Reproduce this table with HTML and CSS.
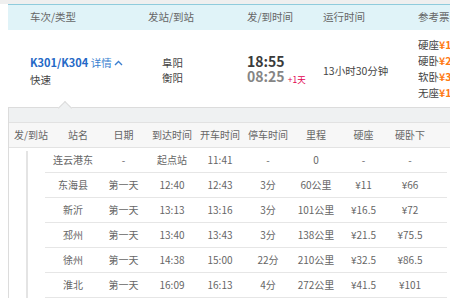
FILE: index.html
```html
<!DOCTYPE html>
<html lang="zh-CN">
<head>
<meta charset="utf-8">
<title>K301/K304</title>
<link rel="stylesheet" href="styles.css">
</head>
<body>
<div class="topline"></div>
<div class="train">
  <div class="thead">
    <div>车次/类型</div>
    <div>发站/到站</div>
    <div>发/到时间</div>
    <div>运行时间</div>
    <div class="nowrap">参考票价</div>
  </div>
  <div class="trow">
    <div class="tcode">
      <div><span class="code">K301/K304</span> <span class="detail">详情<svg class="chev" width="9" height="6" viewBox="0 0 9 6"><path d="M1 5 L4.5 1.5 L8 5" fill="none" stroke="#3a7fd0" stroke-width="1.4"/></svg></span></div>
      <div class="type">快速</div>
    </div>
    <div class="stations">
      <div>阜阳</div>
      <div>衡阳</div>
    </div>
    <div class="times">
      <div class="dep">18:55</div>
      <div class="arr">08:25 <span class="plus">+1天</span></div>
    </div>
    <div class="dur">13小时30分钟</div>
    <div class="prices">
      <div>硬座<b>¥147.5</b></div>
      <div>硬卧<b>¥256.5</b></div>
      <div>软卧<b>¥388.5</b></div>
      <div>无座<b>¥147.5</b></div>
    </div>
  </div>
</div>
<div class="panel">
  <div class="ptop"></div>
  <div class="shead">
    <div>发/到站</div>
    <div class="hname">站名</div>
    <div>日期</div>
    <div>到达时间</div>
    <div>开车时间</div>
    <div>停车时间</div>
    <div>里程</div>
    <div>硬座</div>
    <div>硬卧下</div>
    <div></div>
  </div>
  <div class="sbody">
    <div class="rail"><span></span></div>
    <div class="stops">
      <div class="srow"><div></div><div class="name">连云港东</div><div>-</div><div>起点站</div><div>11:41</div><div>-</div><div>0</div><div>-</div><div>-</div><div></div></div>
      <div class="srow"><div></div><div class="name">东海县</div><div>第一天</div><div>12:40</div><div>12:43</div><div>3分</div><div>60公里</div><div>¥11</div><div>¥66</div><div></div></div>
      <div class="srow"><div></div><div class="name">新沂</div><div>第一天</div><div>13:13</div><div>13:16</div><div>3分</div><div>101公里</div><div>¥16.5</div><div>¥72</div><div></div></div>
      <div class="srow"><div></div><div class="name">邳州</div><div>第一天</div><div>13:40</div><div>13:43</div><div>3分</div><div>138公里</div><div>¥21.5</div><div>¥75.5</div><div></div></div>
      <div class="srow"><div></div><div class="name">徐州</div><div>第一天</div><div>14:38</div><div>15:00</div><div>22分</div><div>210公里</div><div>¥32.5</div><div>¥86.5</div><div></div></div>
      <div class="srow"><div></div><div class="name">淮北</div><div>第一天</div><div>16:09</div><div>16:13</div><div>4分</div><div>272公里</div><div>¥41.5</div><div>¥101</div><div></div></div>
    </div>
  </div>
</div>
</body>
</html>
```

FILE: styles.css
```css
html, body {
  margin: 0;
  padding: 0;
}
body {
  width: 450px;
  height: 300px;
  overflow: hidden;
  background: #fff;
  font-family: "Noto Sans CJK SC", "Noto Sans", sans-serif;
  color: #333;
}
.topline {
  height: 4px;
  background: #efefef;
}
.train {
  margin-left: 8px;
}
.thead,
.trow {
  display: grid;
  grid-template-columns: 118px 99px 76px 95px 1fr;
  padding-left: 22px;
  white-space: nowrap;
}
.thead {
  height: 25px;
  align-items: center;
  background: #e0f3f8;
  border-top: 1px solid #8fcbdc;
  font-size: 10.5px;
  line-height: 1;
  color: #666;
}
.nowrap {
  overflow: hidden;
}
.trow {
  height: 77px;
  align-items: center;
  font-size: 10.5px;
  overflow: hidden;
}
.tcode {
  line-height: 17px;
  margin-top: 4px;
}
.code {
  font-weight: bold;
  font-size: 11px;
  color: #2468c6;
}
.detail {
  color: #3a7fd0;
  font-size: 10.5px;
}
.chev {
  margin-left: 2px;
  vertical-align: 1px;
}
.type {
  color: #444;
}
.stations {
  padding-left: 14px;
  line-height: 15px;
  margin-top: 2px;
  color: #444;
}
.times {
  font-size: 14px;
  font-weight: bold;
}
.times > div {
  height: 15px;
  line-height: 15px;
}
.dep {
  color: #3a3a3a;
}
.arr {
  color: #858585;
}
.plus {
  font-size: 8.5px;
  font-weight: normal;
  color: #e2004f;
  vertical-align: -1px;
}
.dur {
  margin-top: 3px;
  color: #444;
}
.prices {
  line-height: 16px;
  overflow: hidden;
  color: #444;
}
.prices b {
  color: #ff7a14;
  font-weight: bold;
}
.panel {
  position: relative;
  margin-left: 8px;
  border-top: 1px solid #dcdcdc;
  border-left: 1px solid #dcdcdc;
}
.panel::before {
  content: "";
  position: absolute;
  left: 51px;
  top: -5px;
  width: 9px;
  height: 9px;
  background: #eff1f2;
  border-top: 1px solid #dcdcdc;
  border-left: 1px solid #dcdcdc;
  transform: rotate(45deg);
}
.ptop {
  height: 14px;
  background: #eff1f2;
  border-bottom: 1px solid #e2e2e2;
}
.shead,
.srow {
  display: grid;
  align-items: center;
  text-align: center;
  font-size: 10px;
  color: #666;
  white-space: nowrap;
}
.shead {
  grid-template-columns: 44px 46px 49px 48px 48px 48px 48px 47px 46px 1fr;
  height: 24px;
  background: #f7f7f7;
  border-bottom: 1px solid #e3e3e3;
  line-height: 1;
}
.hname {
  padding-left: 4px;
}
.sbody {
  display: flex;
}
.rail {
  width: 36px;
  box-sizing: border-box;
  padding: 3px 0 0 17px;
}
.rail span {
  display: block;
  height: 100%;
  border-left: 2px solid #e4e4e4;
}
.stops {
  flex: 1;
  margin-right: 3px;
}
.srow {
  grid-template-columns: 8px 46px 49px 48px 48px 48px 48px 47px 46px 1fr;
  height: 24px;
  border-bottom: 1px solid #e6e6e6;
  line-height: 1;
}
.name {
  padding-right: 6px;
}
```
